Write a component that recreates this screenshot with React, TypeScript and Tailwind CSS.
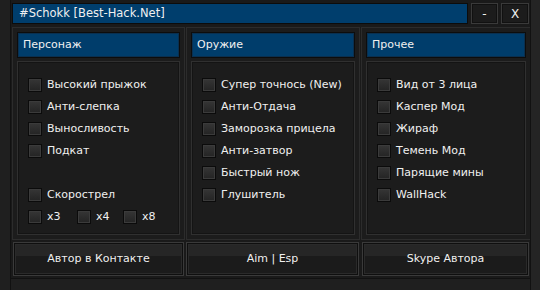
import React from "react"

const col1 = ["Высокий прыжок", "Анти-слепка", "Выносливость", "Подкат"]
const col2 = ["Супер точнось (New)", "Анти-Отдача", "Заморозка прицела", "Анти-затвор", "Быстрый нож", "Глушитель"]
const col3 = ["Вид от 3 лица", "Каспер Мод", "Жираф", "Темень Мод", "Парящие мины", "WallHack"]

function Box() {
  return (
    <span className="flex h-[14px] w-[14px] shrink-0 border border-[#0b0b0b] bg-[#3b3b3b] p-px">
      <span className="h-full w-full bg-gradient-to-b from-[#343434] to-[#252525]" />
    </span>
  )
}

function Check({ label }: { label: string }) {
  return (
    <div className="flex h-[22px] items-center gap-[5px]">
      <Box />
      <span>{label}</span>
    </div>
  )
}

function Column({ title, children }: { title: string; children: React.ReactNode }) {
  return (
    <section className="flex flex-col gap-[3px] border border-[#2c2c2c] bg-[#1c1c1c] p-[4px]">
      <div className="flex h-[26px] items-center border border-[#0d0d0d] bg-[#003d6b] px-[5px] shadow-[inset_0_0_0_1px_#0a3050]">
        {title}
      </div>
      <div className="flex-1 border border-[#303030] shadow-[inset_0_0_0_1px_#141414] pl-[10px] pt-[12px]">
        {children}
      </div>
    </section>
  )
}

function Btn({ className, children }: { className: string; children: React.ReactNode }) {
  return (
    <button className={`flex h-[34px] items-center justify-center border border-[#3a3a3a] bg-[#0f0f0f] p-px ${className}`}>
      <span className="flex h-full w-full items-center justify-center border border-[#2a2a2a] bg-[linear-gradient(#262626_0,#262626_40%,#1b1b1b_40%,#1b1b1b_100%)]">
        {children}
      </span>
    </button>
  )
}

export default function App() {
  return (
    <div className="flex h-[290px] w-[540px] bg-[#222222] font-['DejaVu_Sans',Verdana,sans-serif] text-[11px] text-[#f0f0f0]">
      <div className="w-[11px] border-r border-[#111] bg-[#1f1f1f]" />
      <div className="flex w-[519px] flex-col bg-[#1a1a1a]">
        <header className="flex h-[27px] items-center gap-[3px] pl-px pr-px pt-[3px] pb-[3px]">
          <div className="flex h-[21px] flex-1 items-center border border-[#0c0c0c] bg-[#003e6d] pl-[6px] text-[11.5px]">
            #Schokk [Best-Hack.Net]
          </div>
          <div className="flex h-[21px] w-[27px] items-center justify-center border border-[#3a3a3a] bg-[#1c1c1c] text-[12px] shadow-[inset_0_0_0_1px_#111]">-</div>
          <div className="flex h-[21px] w-[28px] items-center justify-center border border-[#3a3a3a] bg-[#1c1c1c] text-[12px] shadow-[inset_0_0_0_1px_#111]">X</div>
        </header>
        <main className="grid h-[213px] grid-cols-[173px_174px_170px] gap-[1px] pl-px">
          <Column title="Персонаж">
            {col1.map((l) => (
              <Check key={l} label={l} />
            ))}
            <div className="h-[22px]" />
            <Check label="Скорострел" />
            <div className="flex h-[22px] items-center">
              {[
                ["x3", "w-[49px]"],
                ["x4", "w-[46px]"],
                ["x8", ""],
              ].map(([l, w]) => (
                <div key={l} className={`flex items-center gap-[5px] ${w}`}>
                  <Box />
                  <span>{l}</span>
                </div>
              ))}
            </div>
          </Column>
          <Column title="Оружие">
            {col2.map((l) => (
              <Check key={l} label={l} />
            ))}
          </Column>
          <Column title="Прочее">
            {col3.map((l) => (
              <Check key={l} label={l} />
            ))}
          </Column>
        </main>
        <footer className="flex h-[38px] pl-[2px] pt-[2px]">
          <Btn className="w-[171px]">Автор в Контакте</Btn>
          <Btn className="ml-[2px] w-[173px]">Aim | Esp</Btn>
          <Btn className="ml-[3px] w-[167px]">Skype Автора</Btn>
        </footer>
        <div className="flex-1 border-t border-[#111] bg-[#1f1f1f]" />
      </div>
      <div className="w-[10px] border-l border-[#111] bg-[#242424]" />
    </div>
  )
}
